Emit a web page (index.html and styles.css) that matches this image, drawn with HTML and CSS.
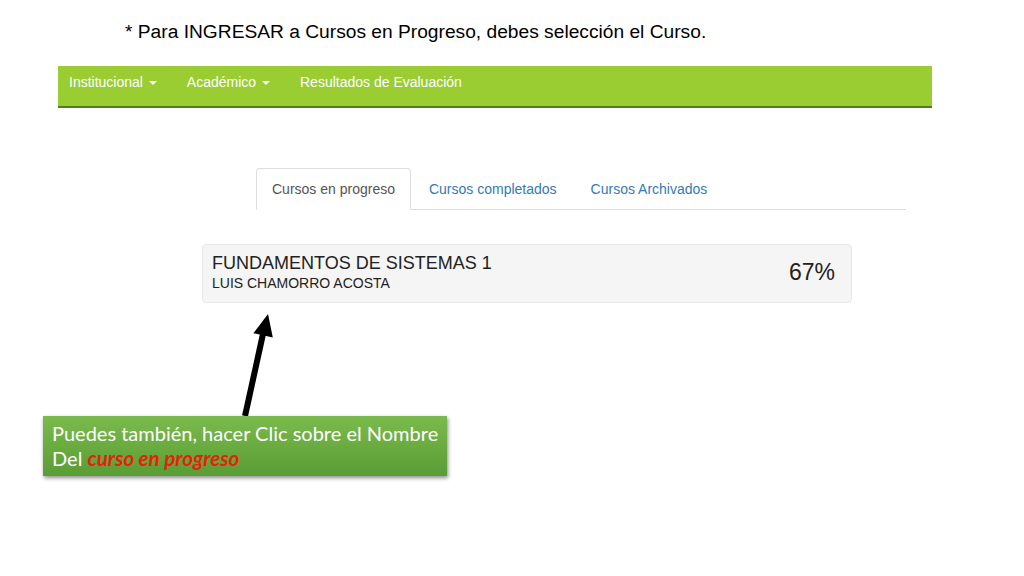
FILE: index.html
```html
<!DOCTYPE html>
<html lang="es">
<head>
    <meta charset="UTF-8">
    <meta name="viewport" content="width=device-width, initial-scale=1.0">
    <title>Cursos en progreso</title>
    <link rel="stylesheet" href="styles.css">
</head>
<body>
    <p class="hint">* Para INGRESAR a Cursos en Progreso, debes selección el Curso.</p>

    <div class="navbar">
        <a href="#" class="nav-link">Institucional <span class="caret"></span></a>
        <a href="#" class="nav-link">Académico <span class="caret"></span></a>
        <a href="#" class="nav-link">Resultados de Evaluación</a>
    </div>

    <ul class="tabs">
        <li class="tab active"><a href="#">Cursos en progreso</a></li>
        <li class="tab"><a href="#">Cursos completados</a></li>
        <li class="tab"><a href="#">Cursos Archivados</a></li>
    </ul>

    <div class="course-card">
        <div class="course-info">
            <div class="course-name">FUNDAMENTOS DE SISTEMAS 1</div>
            <div class="course-teacher">LUIS CHAMORRO ACOSTA</div>
        </div>
        <div class="course-progress">67%</div>
    </div>

    <!-- annotation drawn over the screenshot -->
    <svg class="arrow" width="1024" height="576" viewBox="0 0 1024 576">
        <line x1="245" y1="416" x2="263" y2="334" stroke="#000" stroke-width="6"/>
        <polygon points="268,314 253.4,333.2 272.8,337.6" fill="#000"/>
    </svg>

    <div class="callout">
        Puedes también, hacer Clic sobre el Nombre<br>
        Del <em>curso en progreso</em>
    </div>
</body>
</html>
```

FILE: styles.css
```css
body {
    margin: 0;
    padding: 0;
    width: 1024px;
    height: 576px;
    overflow: hidden;
    position: relative;
    background-color: #fff;
    font-family: "Liberation Sans", Arial, sans-serif;
}

.hint {
    margin: 0;
    padding: 21px 0 0 125px;
    font-size: 19.2px;
    line-height: 22px;
    color: #000;
}

.navbar {
    display: flex;
    margin: 23px 0 0 58px;
    width: 874px;
    height: 40px;
    background-color: #9acd32;
    border-bottom: 2px solid #4f7d1f;
}

.nav-link {
    display: block;
    padding: 6px 15px 0 15px;
    line-height: 20px;
    font-size: 14px;
    color: #fff;
    text-decoration: none;
}

.nav-link:first-child {
    padding-left: 11px;
}

.caret {
    display: inline-block;
    width: 0;
    height: 0;
    margin-left: 2px;
    vertical-align: middle;
    border-top: 4px solid #fff;
    border-left: 4px solid transparent;
    border-right: 4px solid transparent;
}

.tabs {
    display: flex;
    list-style: none;
    margin: 60px 0 0 256px;
    padding: 0;
    width: 650px;
    border-bottom: 1px solid #ddd;
}

.tab {
    margin-right: 2px;
    margin-bottom: -1px;
}

.tab a {
    display: block;
    padding: 10px 15px;
    line-height: 20px;
    font-size: 14px;
    color: #337ab7;
    text-decoration: none;
    border: 1px solid transparent;
    border-radius: 4px 4px 0 0;
}

.tab.active a {
    color: #555;
    background-color: #fff;
    border-color: #ddd #ddd transparent #ddd;
}

.course-card {
    display: flex;
    justify-content: space-between;
    align-items: center;
    box-sizing: border-box;
    margin: 34px 0 0 202px;
    width: 650px;
    height: 59px;
    padding: 8px 16px 10px 9px;
    background-color: #f5f5f5;
    border: 1px solid #e8e8e8;
    border-radius: 4px;
}

.course-name {
    font-size: 18px;
    line-height: 20px;
    color: #222;
}

.course-teacher {
    margin-top: 2px;
    font-size: 14px;
    line-height: 17px;
    color: #222;
}

.course-progress {
    font-size: 23px;
    color: #222;
}

.arrow {
    position: absolute;
    left: 0;
    top: 0;
    pointer-events: none;
}

.callout {
    position: absolute;
    left: 43px;
    top: 416px;
    box-sizing: border-box;
    width: 404px;
    height: 60px;
    padding: 5px 0 0 9px;
    font-family: Lato, "Open Sans", sans-serif;
    font-size: 20px;
    line-height: 25px;
    color: #fff;
    background: linear-gradient(#7bbb4d, #5a9d35);
    box-shadow: 1px 2px 4px rgba(0, 0, 0, 0.45);
}

.callout em {
    font-weight: bold;
    font-size: 20.5px;
    color: #e8200c;
}
```
